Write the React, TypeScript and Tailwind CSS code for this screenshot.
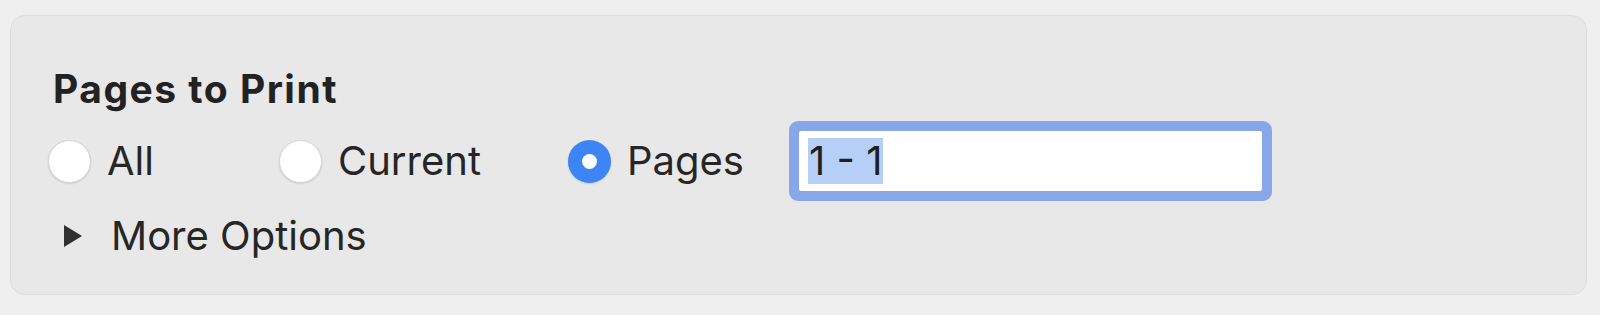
import * as React from "react";

function Radio({ checked }: { checked?: boolean }) {
  if (checked) {
    return (
      <span className="flex h-[43px] w-[43px] shrink-0 items-center justify-center rounded-full bg-[#3d84f5] shadow-[0_1px_2px_rgba(0,0,0,0.15)]">
        <span className="h-[15px] w-[15px] rounded-full bg-white" />
      </span>
    );
  }
  return (
    <span className="h-[43px] w-[43px] shrink-0 rounded-full border border-[#d4d4d4] bg-white shadow-[0_1px_2px_rgba(0,0,0,0.12)]" />
  );
}

function Option({
  label,
  checked,
  className,
}: {
  label: string;
  checked?: boolean;
  className?: string;
}) {
  return (
    <label className={"flex items-center gap-[16px] " + (className ?? "")}>
      <Radio checked={checked} />
      <span className="text-[40px] leading-[44px] text-[#262626]">{label}</span>
    </label>
  );
}

export default function App() {
  return (
    <div
      className="h-[315px] w-[1600px] bg-[#efefef] pt-[15px] pl-[10px]"
      style={{ fontFamily: "Inter, 'Liberation Sans', sans-serif" }}
    >
      <div className="h-[280px] w-[1577px] rounded-[15px] border border-[#dddddd] bg-[#e8e8e8] pt-[50px] pl-[37px]">
        <div className="pl-[5px] text-[39px] font-bold leading-[46px] tracking-[1.5px] text-[#222222]">
          Pages to Print
        </div>

        <div className="mt-[27px] flex h-[44px] items-center">
          <Option label="All" className="w-[231px]" />
          <Option label="Current" className="w-[289px]" />
          <Option label="Pages" checked />

          <div className="ml-[45px] h-[80px] w-[483px] rounded-[9px] bg-[#88a7eb] p-[10px]">
            <div className="flex h-full items-center rounded-[2px] bg-white pl-[9px]">
              <span className="bg-[#b5cff6] px-[1px] text-[40px] leading-[46px] text-[#1f1f1f]">
                1 - 1
              </span>
            </div>
          </div>
        </div>

        <button className="mt-[31px] flex h-[44px] items-center gap-[28px] pl-[15px]">
          <svg width="20" height="24" viewBox="0 0 20 24">
            <path d="M1 1 L19 12 L1 23 Z" fill="#303030" />
          </svg>
          <span className="text-[40px] leading-[44px] text-[#262626]">More Options</span>
        </button>
      </div>
    </div>
  );
}
